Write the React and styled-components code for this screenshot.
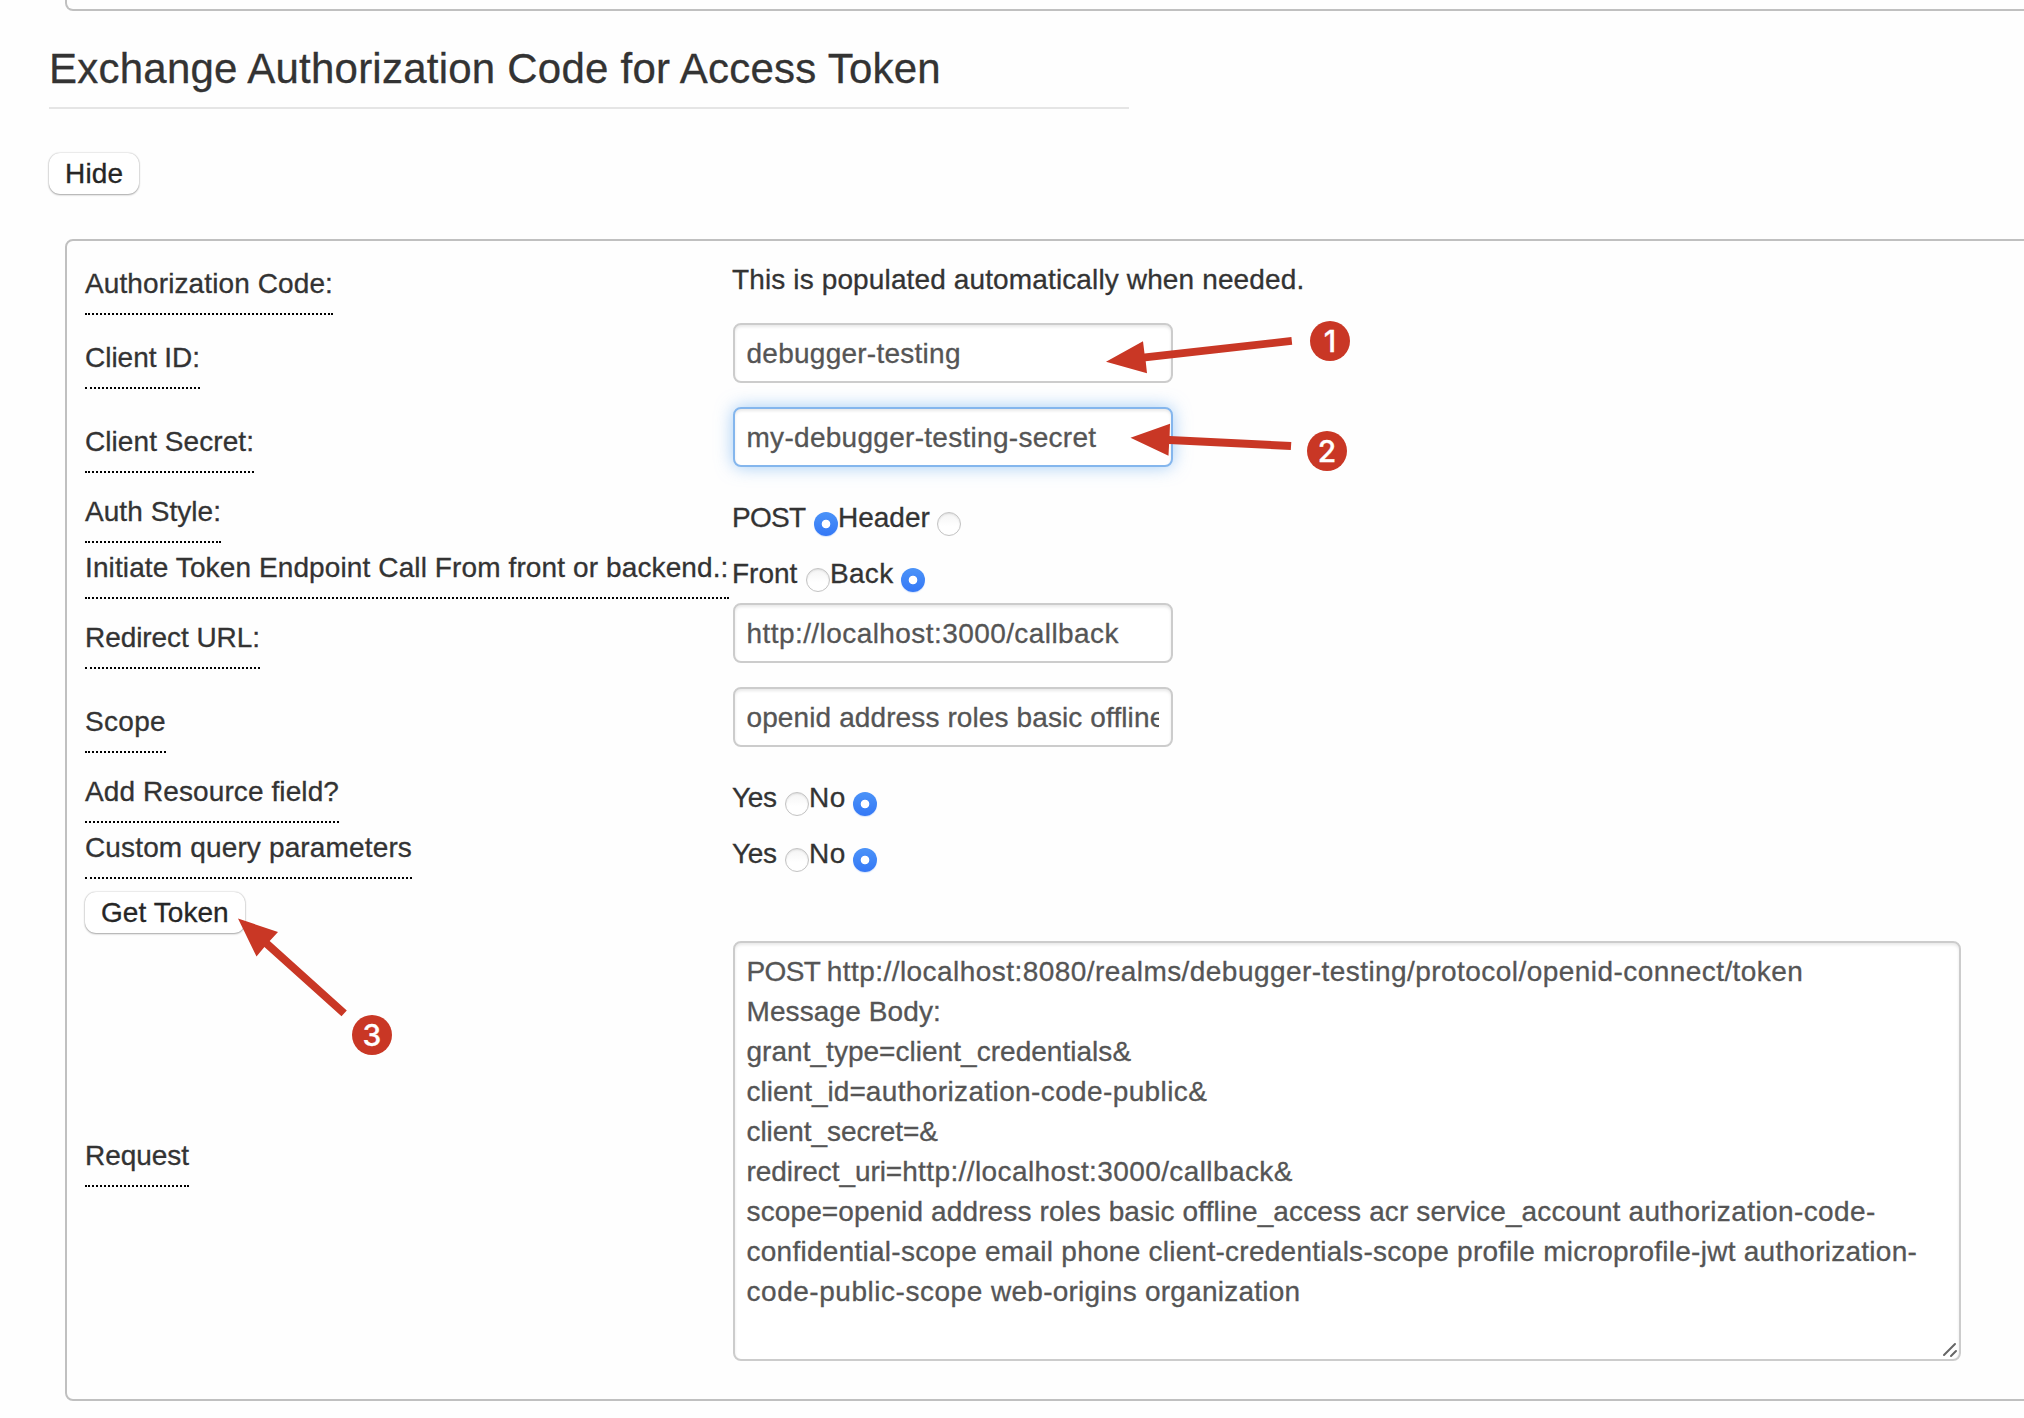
import React from "react";
import styled, { createGlobalStyle, css } from "styled-components";

const GlobalStyle = createGlobalStyle`
  *, *::before, *::after { box-sizing: border-box; }
  body {
    margin: 0;
    overflow: hidden;
    background: #fefefe;
    color: #333;
    font-family: "Liberation Sans", Arial, sans-serif;
    font-size: 28px;
    line-height: 40px;
    -webkit-text-stroke-width: 0.3px;
  }
`;

const accent = "#c93725";

const Page = styled.main`
  position: relative;
  height: 1418px;
  overflow: hidden;
  padding-left: 49px;
`;

const PanelEnd = styled.div`
  height: 11px;
  margin: 0 -20px 0 16px;
  border: 2px solid #c0c0c0;
  border-top: 0;
  border-radius: 0 0 8px 8px;
`;

const Heading = styled.h2`
  width: 1080px;
  height: 79px;
  margin: 19px 0 0;
  padding-top: 12px;
  border-bottom: 2px solid #e5e5e5;
  font-size: 42px;
  font-weight: 400;
  line-height: 54px;
  letter-spacing: 0.23px;
  white-space: nowrap;
`;

const Toolbar = styled.div`
  display: flex;
  align-items: flex-start;
  height: 130px;
  padding-top: 44px;
`;

const Button = styled.button`
  width: ${(p) => p.$width}px;
  height: 41px;
  padding: 0 0 0 16px;
  border: 0;
  border-radius: 11px;
  background: #fff;
  box-shadow: 0 1px 2px rgba(0, 0, 0, 0.3), 0 0 1.5px rgba(0, 0, 0, 0.3);
  color: #262626;
  font: inherit;
  letter-spacing: ${(p) => p.$tracking}px;
  line-height: 40px;
  text-align: left;
  white-space: nowrap;
  -webkit-text-stroke-width: 0.3px;
`;

const Panel = styled.section`
  height: 1162px;
  margin: 0 -20px 0 16px;
  padding: 18px 0 0 18px;
  border: 2px solid #c0c0c0;
  border-radius: 8px;
`;

const Form = styled.div`
  display: grid;
  grid-template-columns: 644px 1228px;
  column-gap: 4px;
  row-gap: 4px;
  align-items: center;
`;

const LabelCell = styled.div`
  display: flex;
  align-items: center;
  height: ${(p) => p.$height}px;
`;

const ButtonCell = styled.div`
  height: 54px;
  padding-top: 9px;
`;

const Label = styled.label`
  width: ${(p) => p.$width}px;
  height: 52px;
  padding-top: 1px;
  border-bottom: 2px dotted #000;
  letter-spacing: ${(p) => p.$tracking}px;
  white-space: nowrap;
`;

const Note = styled.p`
  margin: 1px 0 19px -1px;
  letter-spacing: 0.13px;
`;

const fieldFrame = css`
  border: 2px solid #ccc;
  border-radius: 8px;
  background: #fff;
  box-shadow: inset 0 2px 3px rgba(0, 0, 0, 0.09);
  color: #555;
  font: inherit;
  -webkit-text-stroke-width: 0.3px;
`;

const TextField = styled.input`
  ${fieldFrame}
  display: block;
  width: 440px;
  height: 60px;
  margin: 0 0 20px;
  padding: 9px 12px 7px 11.5px;
  outline: 0;
  letter-spacing: ${(p) => p.$tracking}px;
  ${(p) =>
    p.$active &&
    css`
      border-color: #84b6ed;
      box-shadow: inset 0 2px 3px rgba(0, 0, 0, 0.09), 0 0 17px rgba(100, 170, 240, 0.6);
    `}
`;

const Options = styled.div`
  display: flex;
  height: 52px;
  padding-top: 7px;
  margin-left: -1px;
`;

const OptionText = styled.span`
  width: ${(p) => p.$width}px;
  letter-spacing: ${(p) => p.$tracking}px;
  white-space: nowrap;
`;

const Radio = styled.input`
  appearance: none;
  flex: none;
  width: 24px;
  height: 24px;
  margin: 14px 0 0;
  border-radius: 50%;
  ${(p) =>
    p.checked
      ? css`
          background: radial-gradient(circle, #fff 3.9px, transparent 4.7px),
            linear-gradient(#4b93f8, #3478f6);
          box-shadow: 0 1px 1px rgba(52, 120, 246, 0.2);
        `
      : css`
          border: 1px solid #c3c3c3;
          background: linear-gradient(#f4f4f4, #fff 60%);
          box-shadow: inset 0 1px 2px rgba(0, 0, 0, 0.1);
        `}
`;

const RequestBox = styled.div`
  ${fieldFrame}
  position: relative;
  height: 420px;
  margin-bottom: 20px;
  padding: 9px 12px 7px 11.5px;
`;

const RequestLine = styled.div`
  white-space: pre;
`;

const Run = styled.span`
  letter-spacing: ${(p) => p.$tracking}px;
`;

const ResizeGrip = styled.svg`
  position: absolute;
  right: 1px;
  bottom: 1px;
  width: 16px;
  height: 16px;
`;

const Arrows = styled.svg`
  position: absolute;
  inset: 0 auto auto 0;
  width: 1400px;
  height: 1100px;
  pointer-events: none;
  fill: ${accent};
`;

const Marker = styled.div`
  position: absolute;
  left: ${(p) => p.$x - 20}px;
  top: ${(p) => p.$y - 20}px;
  width: 40px;
  height: 40px;
  border-radius: 50%;
  background: ${accent};
  color: #fff;
  font: 500 30px/41px Inter, sans-serif;
  text-align: center;
`;

const requestLines = [
  [["POST ", -0.65], ["http://localhost:8080/realms/debugger-testing/protocol/openid-connect/token", 0.444]],
  [["Message Body:", 0.107]],
  [["grant_type=client_credentials&", 0.03]],
  [["client_id=", 0.02], ["authorization-code-public&", 0.38]],
  [["client_secret=&", -0.05]],
  [["redirect_uri=", -0.06], ["http://localhost:3000/callback&", 0.4]],
  [["scope=openid address roles basic offline_access acr service_account ", 0.125], ["authorization-code-", 0.4]],
  [["confidential-scope email phone client-credentials-scope profile microprofile-jwt authorization-", 0.265]],
  [["code-public-scope ", 0.53], ["web-origins organization", 0.24]],
];

const yesNo = [
  { text: "Yes", width: 53, tracking: -0.3 },
  { text: "No", width: 44, tracking: 0.5, checked: true },
];

function FieldLabel({ text, width, tracking, height }) {
  return (
    <LabelCell $height={height}>
      <Label $width={width} $tracking={tracking}>{text}</Label>
    </LabelCell>
  );
}

function RadioGroup({ name, options }) {
  return (
    <Options>
      {options.map((o) => (
        <React.Fragment key={o.text}>
          <OptionText $width={o.width} $tracking={o.tracking}>{o.text}</OptionText>
          <Radio type="radio" name={name} checked={!!o.checked} readOnly />
        </React.Fragment>
      ))}
    </Options>
  );
}

export default function App() {
  return (
    <>
      <GlobalStyle />
      <Page>
        <PanelEnd />
        <Heading>Exchange Authorization Code for Access Token</Heading>
        <Toolbar>
          <Button $width={90} $tracking={0.2}>Hide</Button>
        </Toolbar>
        <Panel>
          <Form>
            <FieldLabel text="Authorization Code:" width={248} tracking={0.109} height={60} />
            <Note>This is populated automatically when needed.</Note>

            <FieldLabel text="Client ID:" width={115} tracking={-0.014} height={80} />
            <TextField readOnly value="debugger-testing" $tracking={0.255} />

            <FieldLabel text="Client Secret:" width={169} tracking={0.067} height={80} />
            <TextField readOnly value="my-debugger-testing-secret" $tracking={0.29} $active />

            <FieldLabel text="Auth Style:" width={136} tracking={0.054} height={52} />
            <RadioGroup
              name="auth-style"
              options={[
                { text: "POST", width: 82, tracking: -0.7, checked: true },
                { text: "Header", width: 99, tracking: 0 },
              ]}
            />

            <FieldLabel text="Initiate Token Endpoint Call From front or backend.:" width={644} tracking={0.113} height={52} />
            <RadioGroup
              name="initiate-from"
              options={[
                { text: "Front", width: 74, tracking: 0 },
                { text: "Back", width: 71, tracking: 0.3, checked: true },
              ]}
            />

            <FieldLabel text="Redirect URL:" width={175} tracking={-0.064} height={80} />
            <TextField readOnly value="http://localhost:3000/callback" $tracking={0.43} />

            <FieldLabel text="Scope" width={81} tracking={0.321} height={80} />
            <TextField readOnly value="openid address roles basic offline_access" $tracking={0.11} />

            <FieldLabel text="Add Resource field?" width={254} tracking={0.097} height={52} />
            <RadioGroup name="resource" options={yesNo} />

            <FieldLabel text="Custom query parameters" width={327} tracking={0.144} height={52} />
            <RadioGroup name="custom-query" options={yesNo} />

            <ButtonCell>
              <Button $width={159.5} $tracking={0.07}>Get Token</Button>
            </ButtonCell>
            <span />

            <FieldLabel text="Request" width={104} tracking={-0.041} height={440} />
            <RequestBox>
              {requestLines.map((runs) => (
                <RequestLine key={runs[0][0]}>
                  {runs.map(([text, tracking]) => (
                    <Run key={text} $tracking={tracking}>{text}</Run>
                  ))}
                </RequestLine>
              ))}
              <ResizeGrip viewBox="0 0 16 16" stroke="#666" strokeWidth="2" strokeLinecap="round">
                <path d="M2 13 L13 2 M9 14 L14 9" />
              </ResizeGrip>
            </RequestBox>
          </Form>
        </Panel>

        <Arrows viewBox="0 0 1400 1100">
          <path d="M1106 361.7 L1143 341.3 L1144.5 353.5 L1291.4 337 L1292.2 344.8 L1145.7 361.3 L1147 373.3 Z" />
          <path d="M1130.5 437.7 L1170 423.7 L1169.6 436 L1291.3 442 L1290.8 450 L1169.1 444 L1168.5 455.7 Z" />
          <path d="M238 918.5 L278 932 L269.7 941 L346.8 1010.5 L341.5 1016.2 L264.4 947 L256.5 956.5 Z" />
        </Arrows>
        <Marker $x={1330} $y={341}>1</Marker>
        <Marker $x={1327} $y={451.3}>2</Marker>
        <Marker $x={372} $y={1035}>3</Marker>
      </Page>
    </>
  );
}
